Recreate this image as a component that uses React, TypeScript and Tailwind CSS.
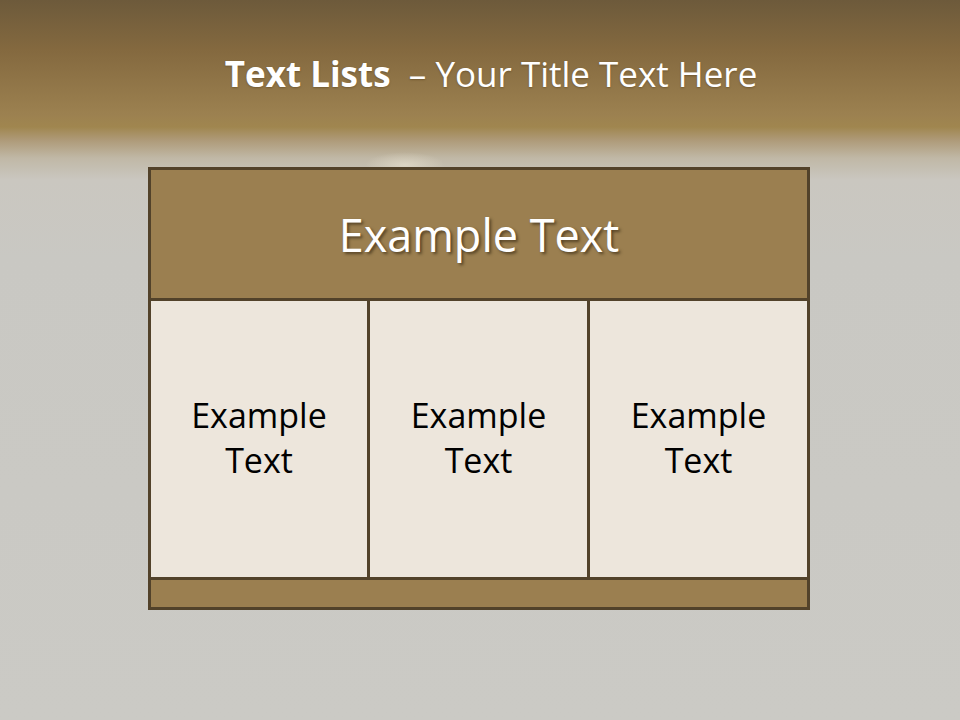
import React from "react";

export default function App() {
  const font = { fontFamily: '"Open Sans", "Noto Sans", sans-serif' };
  return (
    <div
      className="relative w-[960px] h-[720px] overflow-hidden flex flex-col bg-[linear-gradient(to_bottom,#6d5a3b_0px,#84693f_50px,#9c8150_115px,#a0864f_127px,#ae9a78_140px,#c0b8a6_158px,#cac7c0_180px,#c9c8c3_260px,#cbcac5_720px)]"
      style={font}
    >
      <div className="absolute left-[365px] top-[152px] w-[80px] h-[26px] rounded-full bg-[radial-gradient(ellipse_at_center,rgba(235,228,210,0.6),rgba(235,228,210,0)_70%)]" />
      <div className="h-[167px] flex justify-center pt-[49px] pl-[22px]">
        <div className="text-white text-[35px] leading-[50px] whitespace-nowrap [text-shadow:0_1px_2px_rgba(60,40,10,0.35)]">
          <span className="font-bold">Text Lists</span>
          <span>&nbsp; – Your Title Text Here</span>
        </div>
      </div>
      <div className="relative ml-[148px] w-[662px] h-[443px] border-[3px] border-[#52422a] flex flex-col">
        <div className="h-[131px] bg-[#9b7f50] flex items-center justify-center border-b-[3px] border-[#52422a]">
          <span className="text-white text-[45px] leading-none [text-shadow:2px_2px_3px_rgba(40,28,10,0.6)]">
            Example Text
          </span>
        </div>
        <div className="flex-1 grid grid-cols-[219px_220px_1fr] bg-[#ede6dc]">
          {[0, 1, 2].map((i) => (
            <div
              key={i}
              className={`flex items-center justify-center text-center text-black text-[34px] leading-[45px] pb-[3px] ${i < 2 ? "border-r-[3px] border-[#52422a]" : ""}`}
            >
              Example
              <br />
              Text
            </div>
          ))}
        </div>
        <div className="h-[30px] bg-[#9b7f50] border-t-[3px] border-[#52422a]" />
      </div>
    </div>
  );
}
